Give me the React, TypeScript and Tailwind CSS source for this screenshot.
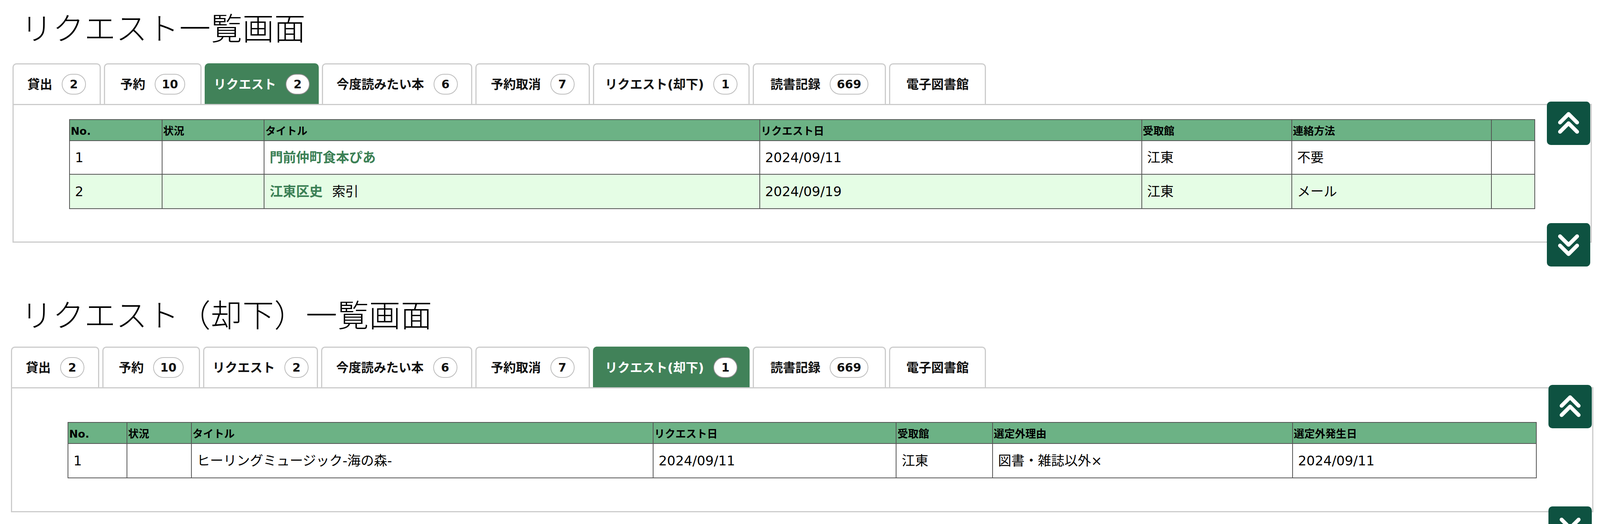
import React from "react";

type Tab = { label: string; count?: string };

const TABS: Tab[] = [
  { label: "貸出", count: "2" },
  { label: "予約", count: "10" },
  { label: "リクエスト", count: "2" },
  { label: "今度読みたい本", count: "6" },
  { label: "予約取消", count: "7" },
  { label: "リクエスト(却下)", count: "1" },
  { label: "読書記録", count: "669" },
  { label: "電子図書館" },
];

const WIDTHS_1 = ["w-[226px]", "w-[250px]", "w-[292px]", "w-[385px]", "w-[293px]", "w-[401px]", "w-[341px]", "w-[248px]"];
const WIDTHS_2 = ["w-[226px]", "w-[250px]", "w-[294px]", "w-[387px]", "w-[293px]", "w-[401px]", "w-[341px]", "w-[248px]"];

function TabBar({ active, widths }: { active: number; widths: string[] }) {
  return (
    <div className="flex gap-[8px] items-end">
      {TABS.map((t, i) => {
        const on = i === active;
        return (
          <div
            key={t.label}
            className={`${widths[i]} shrink-0 h-[104px] rounded-t-[10px] border-[3px] border-b-0 flex items-center justify-center gap-[24px] ${
              on ? "bg-[#418259] border-[#418259] text-white" : "bg-white border-[#cccccc] text-[#111111]"
            }`}
          >
            <span className="text-[32px] font-bold leading-none whitespace-nowrap">{t.label}</span>
            {t.count && (
              <span
                className={`h-[53px] min-w-[62px] px-[16px] rounded-full border-2 bg-white text-[#111111] flex items-center justify-center text-[30px] font-bold leading-none ${
                  on ? "border-[#8a8a8a]" : "border-[#bdbdbd]"
                }`}
              >
                {t.count}
              </span>
            )}
          </div>
        );
      })}
    </div>
  );
}

function ScrollButton({ dir }: { dir: "up" | "down" }) {
  return (
    <div
      className={`absolute right-[1px] w-[111px] h-[111px] rounded-[10px] bg-[#0e5241] ${
        dir === "up" ? "top-[-9px]" : "top-[302px]"
      }`}
    >
      <svg viewBox="0 0 112 112" className="w-full h-full">
        <path
          d={dir === "up" ? "M34 54 L56 32 L78 54 M34 78 L56 56 L78 78" : "M34 34 L56 56 L78 34 M34 58 L56 80 L78 58"}
          fill="none"
          stroke="white"
          strokeWidth="10"
          strokeLinecap="round"
          strokeLinejoin="round"
        />
      </svg>
    </div>
  );
}

const th = "border-2 border-[#555555] text-left align-middle px-[2px] pt-[4px] text-[27px] font-bold leading-none h-[54px]";
const td = "border-2 border-[#555555] align-middle px-[13px] text-[34px] leading-none";
const title = "pl-[54px] h-[80px] text-[80px] leading-[80px] font-light tracking-[1px] font-['Noto_Sans_CJK_JP',sans-serif]";
const link = "font-bold text-[#3b8055]";

export default function App() {
  return (
    <div className="w-full h-[1341px] overflow-hidden bg-white text-black font-['DejaVu_Sans','Noto_Sans_CJK_JP',sans-serif]">
      {/* request list */}
      <h1 className={`mt-[27px] ${title}`}>リクエスト一覧画面</h1>
      <div className="ml-[32px] mr-[21px] mt-[55px]">
        <TabBar active={2} widths={WIDTHS_1} />
        <div className="relative border-[3px] border-[#cccccc] pt-[36px] pb-[83px] px-[142px]">
          <table className="w-full table-fixed border-collapse">
            <colgroup>
              <col className="w-[6.31%]" />
              <col className="w-[6.97%]" />
              <col className="w-[33.82%]" />
              <col className="w-[26.07%]" />
              <col className="w-[10.24%]" />
              <col className="w-[13.62%]" />
              <col className="w-[2.97%]" />
            </colgroup>
            <thead>
              <tr className="bg-[#6cb285]">
                <th className={th}>No.</th>
                <th className={th}>状況</th>
                <th className={th}>タイトル</th>
                <th className={th}>リクエスト日</th>
                <th className={th}>受取館</th>
                <th className={th}>連絡方法</th>
                <th className={th}></th>
              </tr>
            </thead>
            <tbody>
              <tr className="bg-white h-[86px]">
                <td className={td}>1</td>
                <td className={td}></td>
                <td className={td}>
                  <span className={link}>門前仲町食本ぴあ</span>
                </td>
                <td className={td}>2024/09/11</td>
                <td className={td}>江東</td>
                <td className={td}>不要</td>
                <td className={td}></td>
              </tr>
              <tr className="bg-[#e5fde5] h-[88px]">
                <td className={td}>2</td>
                <td className={td}></td>
                <td className={td}>
                  <span className={link}>江東区史</span>
                  <span className="ml-[24px]">索引</span>
                </td>
                <td className={td}>2024/09/19</td>
                <td className={td}>江東</td>
                <td className={td}>メール</td>
                <td className={td}></td>
              </tr>
            </tbody>
          </table>
          <ScrollButton dir="up" />
          <ScrollButton dir="down" />
        </div>
      </div>

      {/* rejected request list */}
      <h1 className={`mt-[140px] ${title}`}>リクエスト（却下）一覧画面</h1>
      <div className="ml-[28px] mr-[17px] mt-[46px]">
        <TabBar active={5} widths={WIDTHS_2} />
        <div className="relative border-[3px] border-[#cccccc] pt-[86px] pb-[84px] px-[142px]">
          <table className="w-full table-fixed border-collapse">
            <colgroup>
              <col className="w-[4.02%]" />
              <col className="w-[4.38%]" />
              <col className="w-[31.45%]" />
              <col className="w-[16.56%]" />
              <col className="w-[6.56%]" />
              <col className="w-[20.43%]" />
              <col className="w-[16.6%]" />
            </colgroup>
            <thead>
              <tr className="bg-[#6cb285]">
                <th className={th}>No.</th>
                <th className={th}>状況</th>
                <th className={th}>タイトル</th>
                <th className={th}>リクエスト日</th>
                <th className={th}>受取館</th>
                <th className={th}>選定外理由</th>
                <th className={th}>選定外発生日</th>
              </tr>
            </thead>
            <tbody>
              <tr className="bg-white h-[88px]">
                <td className={td}>1</td>
                <td className={td}></td>
                <td className={td}>ヒーリングミュージック-海の森-</td>
                <td className={td}>2024/09/11</td>
                <td className={td}>江東</td>
                <td className={td}>図書・雑誌以外×</td>
                <td className={td}>2024/09/11</td>
              </tr>
            </tbody>
          </table>
          <ScrollButton dir="up" />
          <ScrollButton dir="down" />
        </div>
      </div>
    </div>
  );
}
